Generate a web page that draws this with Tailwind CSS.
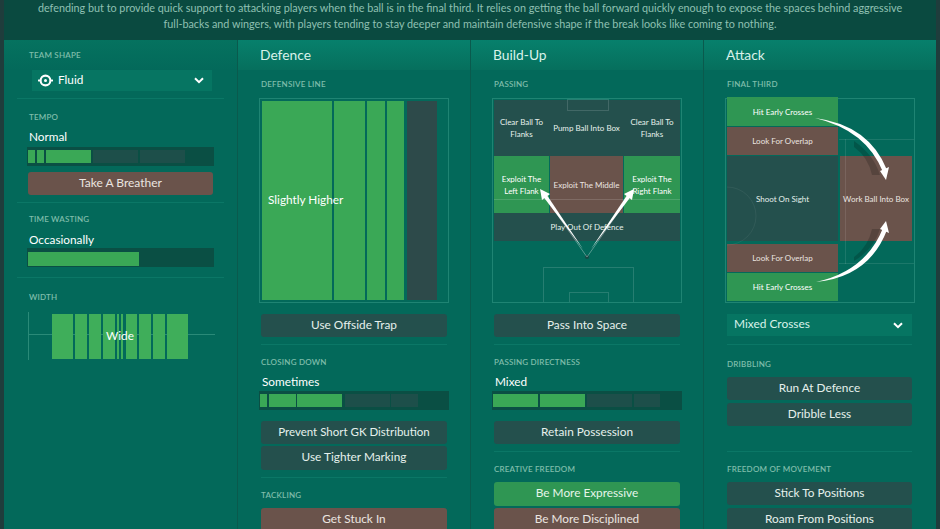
<!DOCTYPE html>
<html lang="en">
<head>
  <meta charset="UTF-8" />
  <title>Tactics</title>
  <script src="https://cdn.jsdelivr.net/npm/@tailwindcss/browser@4"></script>
</head>
<body class="w-[940px] h-[529px] overflow-hidden bg-[#1f3d3c] font-['Lato','Liberation_Sans',sans-serif] text-white">
  <div class="h-[529px] flex flex-col px-[4px]">
    <!-- description -->
    <div class="h-[40px] shrink-0 bg-[#0a4a40] text-center text-[10.8px] leading-[15px] text-[#8fc0b2] overflow-hidden">
      <p>defending but to provide quick support to attacking players when the ball is in the final third. It relies on getting the ball forward quickly enough to expose the spaces behind aggressive</p>
      <p class="pt-[1px]">full-backs and wingers, with players tending to stay deeper and maintain defensive shape if the break looks like coming to nothing.</p>
    </div>

    <div class="flex-1 grid grid-cols-[234px_233px_233px_233px] overflow-hidden">
      <!-- sidebar -->
      <div class="bg-[#03695a] border-r border-[#0a5a4d] h-[489px] px-[24px]">
        <div class="-mx-[24px] px-[25px] h-[30px] bg-linear-to-b from-[#05725f] to-[#03695a] pt-[9px] text-[8px] leading-[12px] font-semibold tracking-[0.2px] text-[#7fbdaa]">TEAM SHAPE</div>
        <div class="ml-[4px] h-[21px] w-[180px] bg-[#067562] flex items-center pl-[6px] pr-[8px]">
          <svg class="w-[15px] h-[15px]" viewBox="0 0 16 16">
            <circle cx="8" cy="8" r="5.2" fill="none" stroke="#fff" stroke-width="2.2"/>
            <circle cx="8" cy="8" r="1.6" fill="#fff"/>
            <rect x="0" y="7" width="3" height="2" fill="#fff"/>
            <rect x="13" y="7" width="3" height="2" fill="#fff"/>
          </svg>
          <span class="ml-[5px] pb-[2px] text-[11.8px]">Fluid</span>
          <svg class="ml-auto w-[10px] h-[7px]" viewBox="0 0 10 7"><path d="M1 1.2 5 5.2 9 1.2" fill="none" stroke="#fff" stroke-width="2"/></svg>
        </div>
        <div class="mt-[7px] -mx-[11px] h-px bg-[#0b7766]"></div>

        <div class="mt-[12px] ml-px text-[8px] leading-[12px] font-semibold tracking-[0.2px] text-[#7fbdaa]">TEMPO</div>
        <div class="mt-[7px] ml-px text-[11.8px] leading-[14px] pb-[2px]">Normal</div>
        <div class="mt-[1px] -ml-px h-[19px] w-[187px] bg-[#0a4f44] flex gap-[2px] items-center pl-[1px]">
          <div class="w-[7px] h-[13px] bg-[#3aa856]"></div>
          <div class="w-[7px] h-[13px] bg-[#3aa856]"></div>
          <div class="w-[45px] h-[13px] bg-[#3aa856]"></div>
          <div class="w-[45px] h-[13px] bg-[#1d4f4a]"></div>
          <div class="w-[45px] h-[13px] bg-[#1d4f4a]"></div>
        </div>
        <div class="mt-[6px] h-[23px] w-[185px] pb-[2px] rounded-[3px] bg-[#6a534b] flex items-center justify-center text-[12px] text-[#ebe5e0]">Take A Breather</div>
        <div class="mt-[7px] -mx-[11px] h-px bg-[#0b7766]"></div>

        <div class="mt-[10px] ml-px text-[8px] leading-[12px] font-semibold tracking-[0.2px] text-[#7fbdaa]">TIME WASTING</div>
        <div class="mt-[7px] ml-px text-[11.8px] leading-[16px]">Occasionally</div>
        <div class="-ml-px h-[19px] w-[187px] bg-[#0a4f44] flex items-start pl-[1px] pt-[4px]">
          <div class="w-[111px] h-[14px] bg-[#3aa856]"></div>
        </div>
        <div class="mt-[10px] -mx-[11px] h-px bg-[#0b7766]"></div>

        <div class="mt-[13px] ml-px text-[8px] leading-[12px] font-semibold tracking-[0.2px] text-[#7fbdaa]">WIDTH</div>
        <div class="relative mt-[9px] h-[48px] w-[187px] flex items-center pl-[24px]">
          <div class="absolute left-0 top-0 w-px h-[48px] bg-[#2a8a78]"></div>
          <div class="absolute left-0 right-0 top-[22px] h-px bg-[#2a8a78]"></div>
          <div class="relative flex gap-[2px] h-[45px]">
            <div class="w-[21px] bg-[#3fae5a]"></div>
            <div class="w-[12px] bg-[#3fae5a]"></div>
            <div class="w-[12px] bg-[#3fae5a]"></div>
            <div class="w-[12px] bg-[#3fae5a]"></div>
            <div class="w-[2px] bg-[#3fae5a]"></div>
            <div class="w-[2px] bg-[#3fae5a]"></div>
            <div class="w-[11px] bg-[#3fae5a] ml-[1px]"></div>
            <div class="w-[12px] bg-[#3fae5a]"></div>
            <div class="w-[12px] bg-[#3fae5a]"></div>
            <div class="w-[21px] bg-[#3fae5a]"></div>
            <span class="absolute inset-0 flex items-center justify-center text-[11.8px]">Wide</span>
          </div>
        </div>
      </div>

      <!-- defence -->
      <div class="bg-[#03695a] border-r border-[#0a5a4d] h-[489px] px-[23px]">
        <div class="-mx-[23px] px-[22px] h-[30px] bg-linear-to-b from-[#07806c] to-[#066f5d] text-[13.8px] leading-[30px] text-[#d8f2ea]">Defence</div>
        <div class="mt-[8px] text-[8px] leading-[12px] font-semibold tracking-[0.2px] text-[#7fbdaa]">DEFENSIVE LINE</div>
        <div class="mt-[8px] h-[205px] w-[190px] -ml-[2px] border border-[#1f8473] p-[2px] flex gap-[2px]">
          <div class="relative w-[70px] bg-[#3aa856]"><span class="absolute left-[6px] top-[90px] whitespace-nowrap text-[11.8px] z-10">Slightly Higher</span></div>
          <div class="w-[31px] bg-[#3aa856]"></div>
          <div class="w-[18px] bg-[#3aa856]"></div>
          <div class="w-[17px] bg-[#3aa856]"></div>
          <div class="w-[30px] ml-[1px] bg-[#2d4a4a]"></div>
        </div>
        <div class="mt-[11px] h-[23px] w-[186px] pb-[2px] rounded-[3px] bg-[#24504d] flex items-center justify-center text-[11.8px] text-[#e6f0ec]">Use Offside Trap</div>
        <div class="mt-[7px] h-px bg-[#0b7766]"></div>
        <div class="mt-[11px] text-[8px] leading-[12px] font-semibold tracking-[0.2px] text-[#7fbdaa]">CLOSING DOWN</div>
        <div class="mt-[7px] ml-px text-[11.8px] leading-[14px] pb-[2px]">Sometimes</div>
        <div class="h-[19px] w-[190px] -ml-[2px] bg-[#0a4f44] flex gap-[1px] items-center pl-[1px]">
          <div class="w-[7px] h-[13px] bg-[#3aa856]"></div>
          <div class="w-[27px] h-[13px] ml-[1px] bg-[#3aa856]"></div>
          <div class="w-[45px] h-[13px] bg-[#3aa856]"></div>
          <div class="w-[45px] h-[13px] ml-[2px] bg-[#1d4f4a]"></div>
          <div class="w-[27px] h-[13px] bg-[#1d4f4a]"></div>
        </div>
        <div class="mt-[11px] h-[23px] w-[186px] pb-[2px] rounded-[3px] bg-[#24504d] flex items-center justify-center text-[11.5px] text-[#e6f0ec]">Prevent Short GK Distribution</div>
        <div class="mt-[2px] h-[24px] w-[186px] pb-[2px] rounded-[3px] bg-[#24504d] flex items-center justify-center text-[11.8px] text-[#e6f0ec]">Use Tighter Marking</div>
        <div class="mt-[7px] h-px bg-[#0b7766]"></div>
        <div class="mt-[11px] text-[8px] leading-[12px] font-semibold tracking-[0.2px] text-[#7fbdaa]">TACKLING</div>
        <div class="mt-[7px] h-[23px] w-[186px] pb-[2px] rounded-[3px] bg-[#6a534b] flex items-center justify-center text-[11.8px] text-[#ebe5e0]">Get Stuck In</div>
      </div>

      <!-- build-up -->
      <div class="bg-[#03695a] border-r border-[#0a5a4d] h-[489px] px-[23px]">
        <div class="-mx-[23px] px-[22px] h-[30px] bg-linear-to-b from-[#07806c] to-[#066f5d] text-[13.8px] leading-[30px] text-[#d8f2ea]">Build-Up</div>
        <div class="mt-[8px] text-[8px] leading-[12px] font-semibold tracking-[0.2px] text-[#7fbdaa]">PASSING</div>
        <div class="relative mt-[8px] h-[205px] w-[190px] -ml-[2px] border border-[#1f8473] p-px text-[8px] leading-[12px] text-center">
          <div class="grid grid-cols-[55px_75px_56px] grid-rows-[56px_57px_28px] w-[186px]">
            <div class="bg-[#24504d] flex items-center justify-center px-[3px] text-[#e6f0ec]">Clear Ball To Flanks</div>
            <div class="bg-[#24504d] flex items-center justify-center text-[#e6f0ec]">Pump Ball Into Box</div>
            <div class="bg-[#24504d] flex items-center justify-center px-[3px] text-[#e6f0ec]">Clear Ball To Flanks</div>
            <div class="bg-[#2f9653] flex items-center justify-center px-[5px]">Exploit The Left Flank</div>
            <div class="bg-[#6a534b] flex items-center justify-center mx-px text-[#ebe5e0]">Exploit The Middle</div>
            <div class="bg-[#2f9653] flex items-center justify-center px-[5px]">Exploit The Right Flank</div>
            <div class="col-span-3 bg-[#24504d] flex items-center justify-center text-[#e6f0ec]">Play Out Of Defence</div>
          </div>
          <svg class="absolute left-0 top-0 w-[188px] h-[203px]" viewBox="0 0 188 203">
            <g fill="none" stroke="#fff" stroke-opacity=".14">
              <rect x="50.5" y="168.5" width="90" height="35"/>
              <rect x="76.5" y="193.5" width="39" height="10"/>
              <rect x="74.5" y="0.5" width="41" height="11"/>
              <path d="M1 100.5 H187"/>
            </g>
            <circle cx="94" cy="158" r="2" fill="#184a45"/>
            <path d="M94 158 L48 92.5" stroke="#fff" stroke-opacity=".55" stroke-width=".6"/>
            <path d="M94 158 L140 92.5" stroke="#fff" stroke-opacity=".55" stroke-width=".6"/>
            <polygon points="90,150 50.5,98 53.5,95.5" fill="#fff"/>
            <polygon points="98,150 137.5,98 134.5,95.5" fill="#fff"/>
            <polygon points="47,90 57,95 49,101" fill="#fff"/>
            <polygon points="141,90 131,95 139,101" fill="#fff"/>
          </svg>
        </div>
        <div class="mt-[11px] h-[23px] w-[186px] pb-[2px] rounded-[3px] bg-[#24504d] flex items-center justify-center text-[11.8px] text-[#e6f0ec]">Pass Into Space</div>
        <div class="mt-[7px] h-px bg-[#0b7766]"></div>
        <div class="mt-[11px] text-[8px] leading-[12px] font-semibold tracking-[0.2px] text-[#7fbdaa]">PASSING DIRECTNESS</div>
        <div class="mt-[7px] text-[11.8px] leading-[14px] pb-[2px] ml-px">Mixed</div>
        <div class="h-[19px] w-[190px] -ml-[2px] bg-[#0a4f44] flex gap-[2px] items-center pl-[1px]">
          <div class="w-[45px] h-[13px] bg-[#3aa856]"></div>
          <div class="w-[45px] h-[13px] bg-[#3aa856]"></div>
          <div class="w-[45px] h-[13px] bg-[#1d4f4a]"></div>
          <div class="w-[26px] h-[13px] bg-[#1d4f4a]"></div>
        </div>
        <div class="mt-[11px] h-[23px] w-[186px] pb-[2px] rounded-[3px] bg-[#24504d] flex items-center justify-center text-[11.8px] text-[#e6f0ec]">Retain Possession</div>
        <div class="mt-[7px] h-px bg-[#0b7766]"></div>
        <div class="mt-[11px] text-[8px] leading-[12px] font-semibold tracking-[0.2px] text-[#7fbdaa]">CREATIVE FREEDOM</div>
        <div class="mt-[7px] h-[24px] w-[186px] pb-[2px] rounded-[3px] bg-[#2f9653] flex items-center justify-center text-[11.8px] text-[#e6f5ea]">Be More Expressive</div>
        <div class="mt-[2px] h-[23px] w-[186px] pb-[2px] rounded-[3px] bg-[#6a534b] flex items-center justify-center text-[11.8px] text-[#ebe5e0]">Be More Disciplined</div>
      </div>

      <!-- attack -->
      <div class="bg-[#03695a] h-[489px] px-[23px]">
        <div class="-mx-[23px] px-[22px] h-[30px] bg-linear-to-b from-[#07806c] to-[#066f5d] text-[13.8px] leading-[30px] text-[#d8f2ea]">Attack</div>
        <div class="mt-[8px] text-[8px] leading-[12px] font-semibold tracking-[0.2px] text-[#7fbdaa]">FINAL THIRD</div>
        <div class="relative mt-[8px] h-[205px] w-[190px] -ml-[2px] border border-[#1f8473] text-[8px] leading-[12px] text-center">
          <div class="grid grid-cols-[111px_2px_72px] grid-rows-[29px_1px_28px_1px_85px_3px_28px_1px_28px] -mt-[2px] ml-px">
            <div class="col-start-1 row-start-1 bg-[#2f9653] flex items-center justify-center">Hit Early Crosses</div>
            <div class="col-start-1 row-start-3 bg-[#6a534b] flex items-center justify-center text-[#ebe5e0]">Look For Overlap</div>
            <div class="col-start-1 row-start-5 bg-[#24504d] flex items-center justify-center text-[#e6f0ec]">Shoot On Sight</div>
            <div class="col-start-3 row-start-5 bg-[#6a534b] flex items-center justify-center text-[#ebe5e0]">Work Ball Into Box</div>
            <div class="col-start-1 row-start-7 bg-[#6a534b] flex items-center justify-center text-[#ebe5e0]">Look For Overlap</div>
            <div class="col-start-1 row-start-9 bg-[#2f9653] flex items-center justify-center">Hit Early Crosses</div>
          </div>
          <svg class="absolute left-0 top-0 w-[188px] h-[203px]" viewBox="0 0 188 203">
            <g fill="none" stroke="#fff" stroke-opacity=".1">
              <path d="M113 40.5 H188 M113 164.5 H188 M119.5 40 V165"/>
            </g>
            <path d="M1 88 A29 29 0 0 1 1 146" fill="none" stroke="#fff" stroke-opacity=".06"/>
            <path d="M128 42 Q148 56 154 76 L146 76 Q142 58 128 48Z" fill="#000" fill-opacity=".18"/>
            <path d="M128 162 Q148 150 154 130 L146 130 Q142 148 128 158Z" fill="#000" fill-opacity=".18"/>
            <path d="M89 19 Q143 26 161 71 L157 73 Q140 31 89 19Z" fill="#fff"/>
            <polygon points="154,72 163,68 160,81" fill="#fff"/>
            <path d="M90 183 Q143 178 161 131 L157 129 Q140 172 90 183Z" fill="#fff"/>
            <polygon points="154,130 163,134 160,122" fill="#fff"/>
          </svg>
        </div>
        <div class="mt-[11px] h-[22px] w-[185px] bg-[#067562] flex items-center pl-[7px] pr-[9px] text-[11.9px] text-[#d8f2ea]">
          <span class="pb-[2px]">Mixed Crosses</span>
          <svg class="ml-auto w-[10px] h-[7px]" viewBox="0 0 10 7"><path d="M1 1.2 5 5.2 9 1.2" fill="none" stroke="#fff" stroke-width="2"/></svg>
        </div>
        <div class="mt-[8px] h-px w-[185px] bg-[#0b7766]"></div>
        <div class="mt-[13px] text-[8px] leading-[12px] font-semibold tracking-[0.2px] text-[#7fbdaa]">DRIBBLING</div>
        <div class="mt-[7px] h-[23px] w-[185px] pb-[2px] rounded-[3px] bg-[#24504d] flex items-center justify-center text-[11.8px] text-[#e6f0ec]">Run At Defence</div>
        <div class="mt-[3px] h-[23px] w-[185px] pb-[2px] rounded-[3px] bg-[#24504d] flex items-center justify-center text-[11.8px] text-[#e6f0ec]">Dribble Less</div>
        <div class="mt-[25px] h-px w-[185px] bg-[#0b7766]"></div>
        <div class="mt-[11px] text-[8px] leading-[12px] font-semibold tracking-[0.2px] text-[#7fbdaa]">FREEDOM OF MOVEMENT</div>
        <div class="mt-[7px] h-[23px] w-[185px] pb-[2px] rounded-[3px] bg-[#24504d] flex items-center justify-center text-[11.8px] text-[#e6f0ec]">Stick To Positions</div>
        <div class="mt-[3px] h-[23px] w-[185px] pb-[2px] rounded-[3px] bg-[#24504d] flex items-center justify-center text-[11.8px] text-[#e6f0ec]">Roam From Positions</div>
      </div>
    </div>
  </div>
</body>
</html>
